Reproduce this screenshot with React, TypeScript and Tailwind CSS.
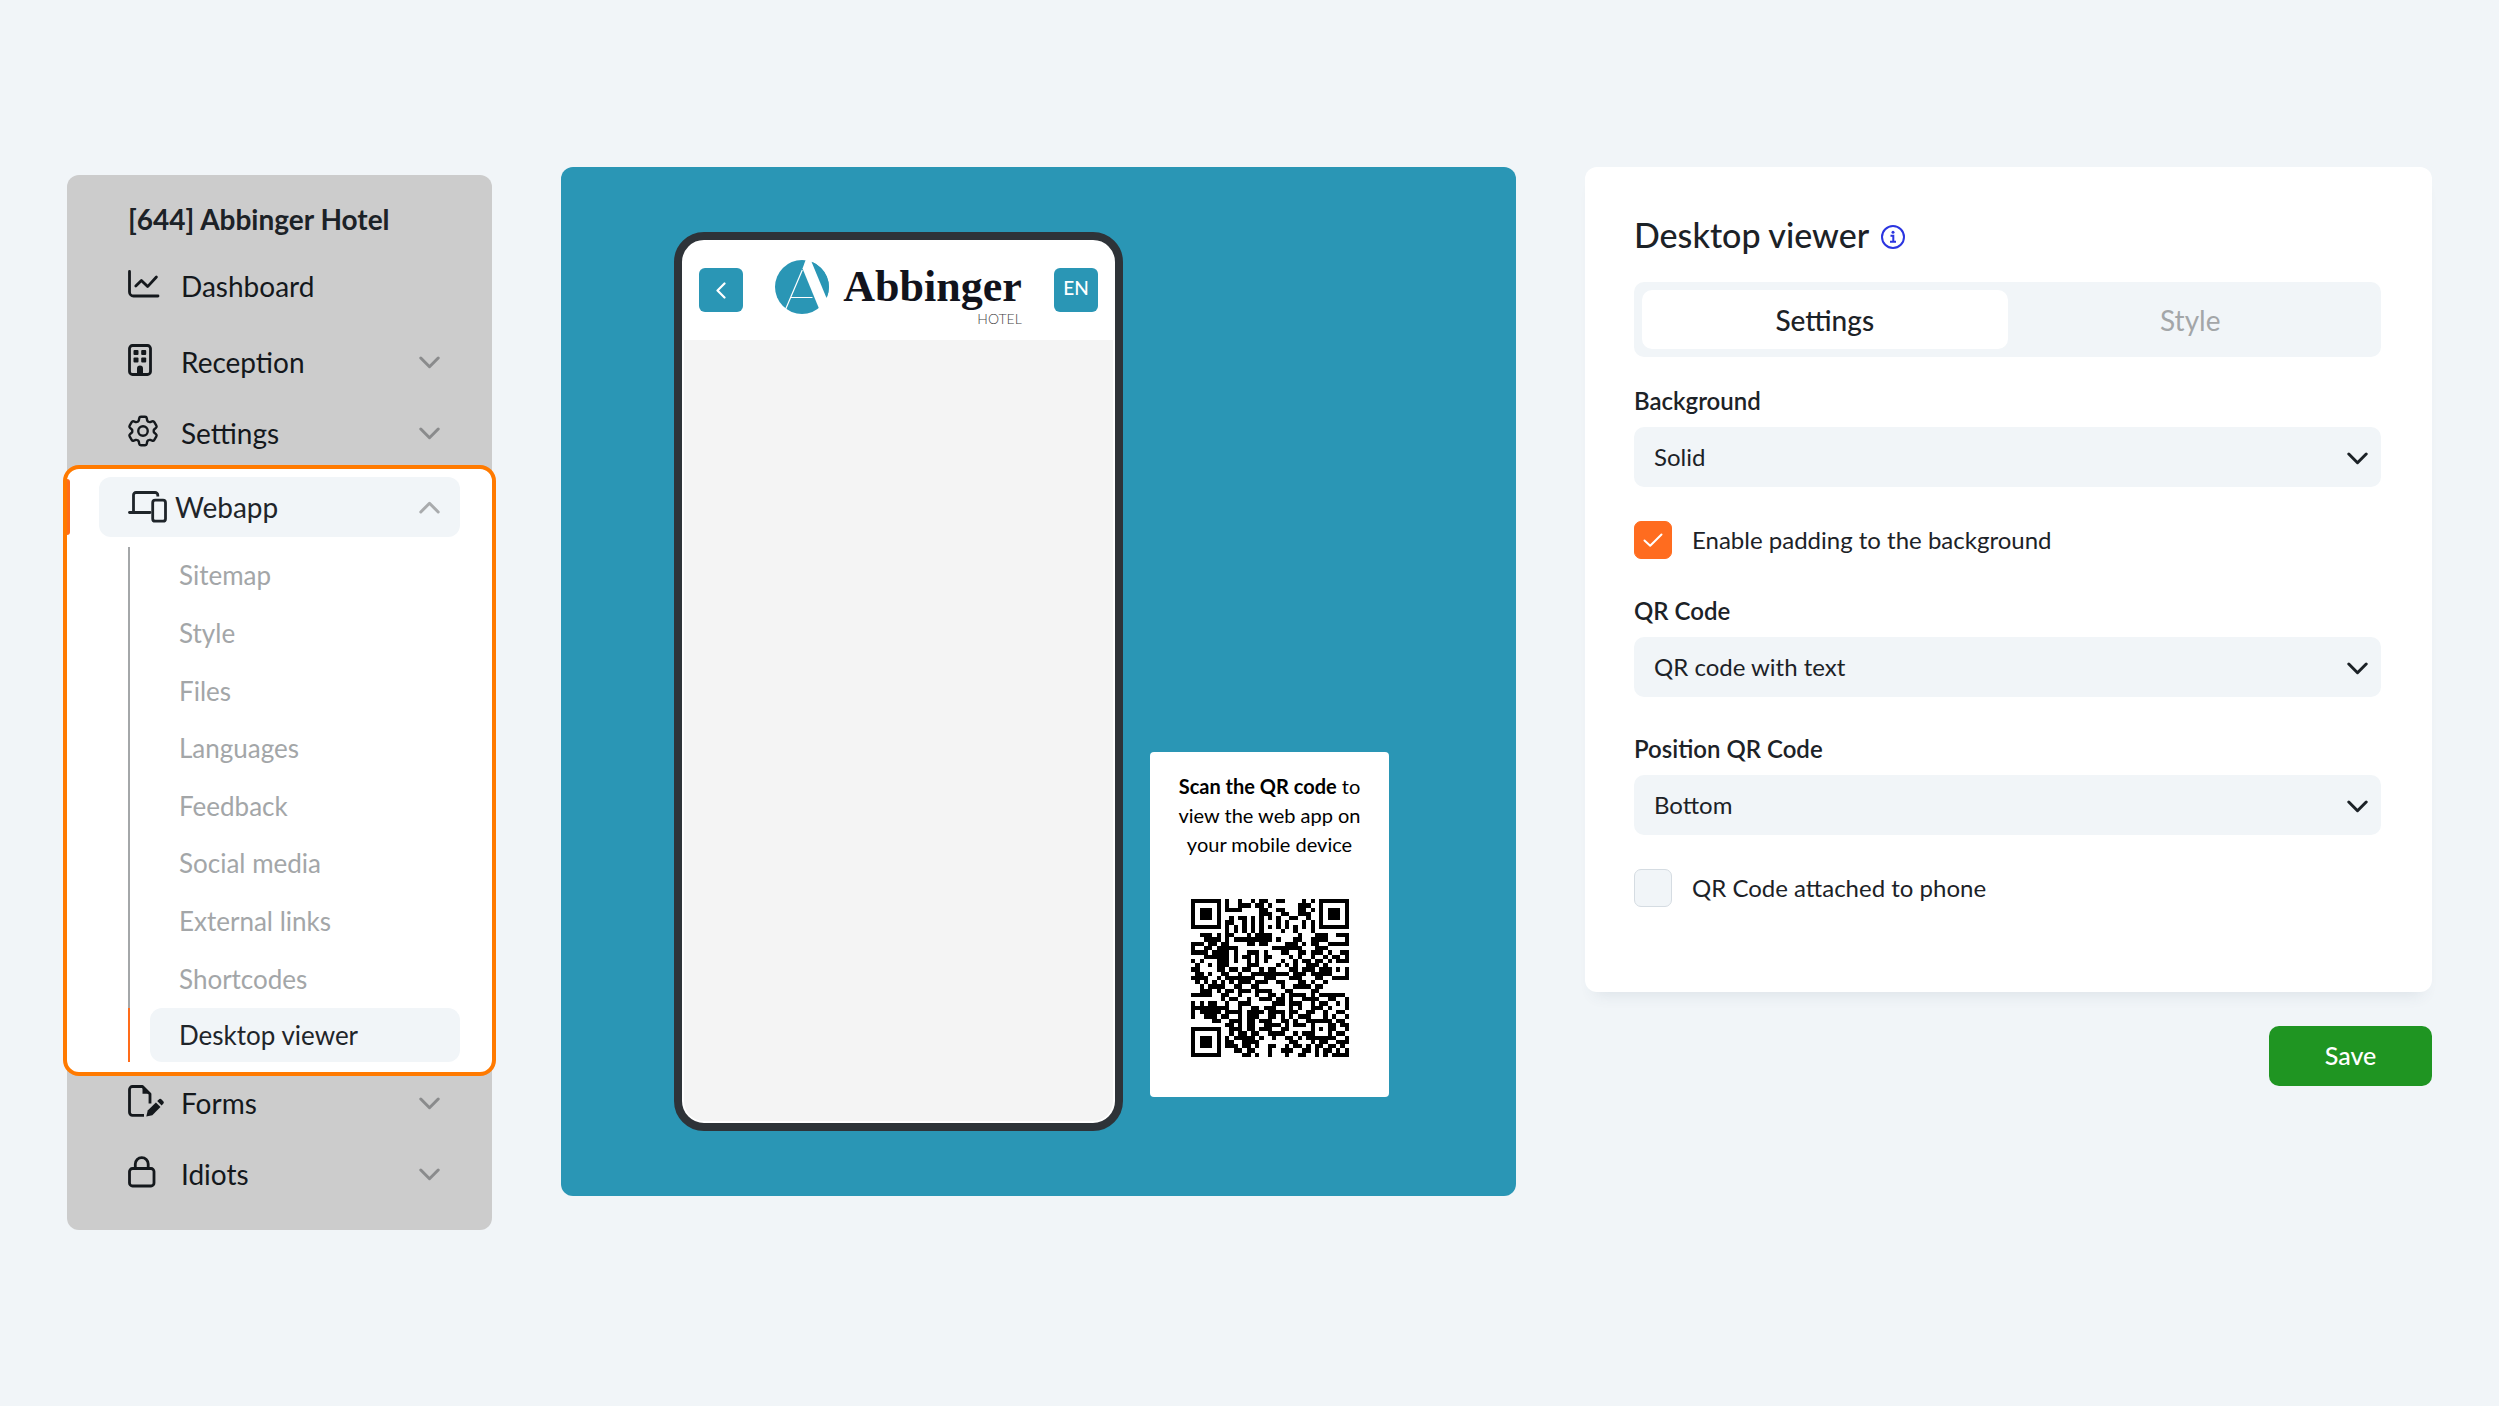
import { useState } from "react"
import type { ReactNode } from "react"
import clsx from "clsx"
import { HiOutlineCog6Tooth } from "react-icons/hi2"

const submenu = [
  "Sitemap",
  "Style",
  "Files",
  "Languages",
  "Feedback",
  "Social media",
  "External links",
  "Shortcodes",
]

const qrRows = [
  "1111111010010010110011000010101111111",
  "1000001010011101101000000111001000001",
  "1011101011110000110011000110101011101",
  "1011101000000000111001100111001011101",
  "1011101001011010101010011001001011101",
  "1000001011001010100010100010101000001",
  "1111111010101010101010101010101111111",
  "0000000010101010100001001000100000000",
  "0011101011000101111000000100011100111",
  "0001111010111111111010001100111100001",
  "1110110110000110110000111010110011111",
  "1001101111100000000111111100011100000",
  "1111011110100111010001100110111010011",
  "0001111110101101011000010100100101101",
  "1010001110100101010001001011011010111",
  "0100101110000111000010101001110100000",
  "1100001101101100101100011011101110101",
  "0110100110010011111111101110111110001",
  "1111001011111110011100011100011001111",
  "0101010101011101110011000110100100000",
  "0010111100110011000001001111011000000",
  "0011101011011101111000110000110000000",
  "1111100110010001001101011110101111110",
  "0000000101100100111011010011110011001",
  "1010110010011100000111011100101100101",
  "1111111110010011011100010100111010001",
  "1011111011110111101111011001100100110",
  "1001110110010111001101010111000101001",
  "0000011001110110111001101001111110110",
  "0000000011010110011110101110100011011",
  "1111111001110110111001100000101011001",
  "1000001001011011001111001011100010110",
  "1011101010111110100100110101111111001",
  "1011101011001111000000011000101100111",
  "1011101011101101001100101101011011010",
  "1000001000110110001001110011010110101",
  "1111111000001101001000100110010101111",
]

const Chevron = ({ up, className }: { up?: boolean; className?: string }) => (
  <svg
    viewBox="0 0 21 13"
    className={clsx("h-[13px] w-[21px] shrink-0", up && "rotate-180", className)}
    fill="none"
    stroke="currentColor"
    strokeWidth="3"
    strokeLinecap="round"
    strokeLinejoin="round"
    aria-hidden="true"
  >
    <path d="M1.8 2l8.7 8.7L19.2 2" />
  </svg>
)

const Stroke = ({ width, height, children }: { width: number; height: number; children: ReactNode }) => (
  <svg
    width={width}
    height={height}
    viewBox={`0 0 ${width} ${height}`}
    className="shrink-0"
    fill="none"
    stroke="currentColor"
    strokeWidth="2.8"
    strokeLinecap="round"
    strokeLinejoin="round"
    aria-hidden="true"
  >
    {children}
  </svg>
)

const ChartIcon = () => (
  <Stroke width={32} height={28}>
    <path d="M1.5 1.5V22a4 4 0 0 0 4 4H30" />
    <path d="M7.8 16l5.6-5.6 6.2 6.2L28.4 7" />
  </Stroke>
)

const BuildingIcon = () => (
  <Stroke width={24} height={32}>
    <rect x="1.5" y="1.5" width="21" height="29" rx="3" />
    <g fill="currentColor" stroke="none">
      <rect x="5.5" y="6" width="5" height="5" rx="1" />
      <rect x="13.2" y="6" width="5" height="5" rx="1" />
      <rect x="5.5" y="13.4" width="5" height="5" rx="1" />
      <rect x="13.2" y="13.4" width="5" height="5" rx="1" />
      <path d="M9 30.5V24.6a3 3 0 0 1 6 0V30.5z" />
    </g>
  </Stroke>
)

const DevicesIcon = () => (
  <Stroke width={39} height={32}>
    <path d="M5.5 20.5V4a2.5 2.5 0 0 1 2.5-2.5H27a2.8 2.8 0 0 1 2.8 2.8V5.5" strokeLinecap="butt" />
    <path d="M1.5 21.5H22" />
    <rect x="24.7" y="9.2" width="12.8" height="21" rx="2.5" />
  </Stroke>
)

const FormIcon = () => (
  <Stroke width={36} height={32}>
    <path d="M16 30.3H4.5a3 3 0 0 1-3-3V4.5a3 3 0 0 1 3-3H14.5L22 9V18.5" strokeLinecap="butt" />
    <path d="M14.5 2V8.8H21.5z" fill="currentColor" stroke="none" />
    <g fill="currentColor" stroke="none">
      <path d="M18.3 31.6l1.4-6 8.2-8.2 4.6 4.6-8.2 8.2z" />
      <path d="M29.2 16.1l1.4-1.4a2.2 2.2 0 0 1 3.2 0l1.2 1.2a2.2 2.2 0 0 1 0 3.2l-1.4 1.4z" />
    </g>
  </Stroke>
)

const LockIcon = () => (
  <Stroke width={28} height={32}>
    <rect x="1.5" y="12.5" width="24.5" height="17.5" rx="3" />
    <path d="M7.3 12.5V8a6.45 6.45 0 0 1 12.9 0V12.5" />
  </Stroke>
)

const MenuItem = ({ icon, label, expandable = true }: { icon: ReactNode; label: string; expandable?: boolean }) => (
  <a href="#" className="flex h-[54px] items-center pl-[61px] pr-[52px] text-[28px] text-[#14181c]">
    <span className="flex w-[53px] shrink-0 pb-1">{icon}</span>
    <span className="flex-1">{label}</span>
    {expandable && <Chevron className="text-[#8a8b8c]" />}
  </a>
)

const Sidebar = () => (
  <nav className="mt-2 rounded-xl bg-[#ccc] pt-6 pb-[29px]">
    <h2 className="pl-[61px] text-[28px] leading-10 font-bold text-[#1c2227]">[644] Abbinger Hotel</h2>
    <div className="mt-5">
      <MenuItem icon={<ChartIcon />} label="Dashboard" expandable={false} />
    </div>
    <div className="mt-[22px] mb-[5px] flex flex-col gap-[17px]">
      <MenuItem icon={<BuildingIcon />} label="Reception" />
      <MenuItem icon={<HiOutlineCog6Tooth className="-ml-1 size-[38px]" />} label="Settings" />
    </div>

    <div className="relative -mx-1 rounded-2xl border-4 border-[#ff7a00] bg-white pt-2 pr-8 pb-[10px] pl-8">
      <span className="absolute top-[10px] left-0 h-14 w-[3px] rounded-r bg-[#ff6c1a]" />
      <a
        href="#"
        className="flex h-[60px] items-center rounded-xl bg-[#f1f5f8] pl-[29px] pr-5 text-[28px] text-[#1f252a]"
      >
        <span className="flex w-[47px] shrink-0">
          <DevicesIcon />
        </span>
        <span className="flex-1">Webapp</span>
        <Chevron up className="text-[#a9abad]" />
      </a>
      <div className="mt-[10px] ml-[29px] text-[26px]">
        <div className="flex h-[461px] flex-col border-l-2 border-[#a4a7a9]">
          {submenu.map((item) => (
            <a key={item} href="#" className="flex flex-1 items-center pl-[49px] text-[#a3a6a8]">
              {item}
            </a>
          ))}
        </div>
        <div className="border-l-2 border-[#ff6c1a] pl-5">
          <a href="#" className="flex h-[54px] items-center rounded-xl bg-[#f1f5f8] pl-[29px] text-[#1f252a]">
            Desktop viewer
          </a>
        </div>
      </div>
    </div>

    <div className="flex flex-col gap-[17px]">
      <MenuItem icon={<FormIcon />} label="Forms" />
      <MenuItem icon={<LockIcon />} label="Idiots" />
    </div>
  </nav>
)

const Logo = () => (
  <div className="flex">
    <svg viewBox="0 0 54 54" className="mt-[-3px] size-[54px]" aria-hidden="true">
      <circle cx="27" cy="27" r="27" fill="#2a96b5" />
      <path d="M31 -1L27.5 8.5L44.6 50L54 41L36 -1z" fill="#fff" />
      <path d="M36.5 1.8A27 27 0 0 1 51.5 38z" fill="#2a96b5" />
      <path d="M27.3 10L10.5 49.5M15.5 37.5H37.5" stroke="#fff" strokeWidth="1.2" fill="none" />
    </svg>
    <div className="ml-[14px] flex flex-col items-end">
      <span className="font-['Liberation_Serif',serif] text-[44px] leading-[48px] font-bold text-[#11131c]">
        Abbinger
      </span>
      <span className="text-sm leading-4 font-light text-[#444]">HOTEL</span>
    </div>
  </div>
)

const Phone = () => (
  <div className="flex h-[899px] w-[449px] flex-col overflow-hidden rounded-[30px] border-8 border-[#2e3338] bg-white">
    <header className="flex h-[100px] shrink-0 items-start justify-between px-[17px] pt-7">
      <button
        type="button"
        aria-label="Back"
        className="flex size-11 items-center justify-center rounded-md bg-[#2a96b5] text-white"
      >
        <svg
          viewBox="0 0 10 17"
          className="h-[17px] w-[10px]"
          fill="none"
          stroke="currentColor"
          strokeWidth="2.2"
          strokeLinecap="round"
          strokeLinejoin="round"
        >
          <path d="M8.5 1.5l-7 7 7 7" />
        </svg>
      </button>
      <div className="-mt-[5px]">
        <Logo />
      </div>
      <button type="button" className="size-11 rounded-md bg-[#2a96b5] pb-1 text-[19px] font-medium text-white">
        EN
      </button>
    </header>
    <div className="mx-[2px] mb-[2px] flex-1 rounded-b-[20px] bg-[#f4f4f4]" />
  </div>
)

const QrCode = () => (
  <svg viewBox="0 0 37 37" className="size-[158px]" shapeRendering="crispEdges" role="img" aria-label="QR code">
    {qrRows.map((row, y) =>
      row.split("").map((cell, x) => cell === "1" && <rect key={`${x}-${y}`} x={x} y={y} width="1" height="1" />)
    )}
  </svg>
)

const Preview = () => (
  <section className="flex h-[1029px] items-end rounded-xl bg-[#2a96b5] pb-[65px] pl-[113px]">
    <Phone />
    <div className="mb-[34px] ml-[27px] flex h-[345px] w-[239px] shrink-0 flex-col items-center rounded-[4px] bg-white pt-5">
      <p className="text-center text-[20px] leading-[29px] text-black">
        <strong>Scan the QR code</strong> to
        <br />
        view the web app on
        <br />
        your mobile device
      </p>
      <div className="mt-10">
        <QrCode />
      </div>
    </div>
  </section>
)

const Select = ({ id, label, options }: { id: string; label: string; options: string[] }) => (
  <div>
    <label htmlFor={id} className="block text-[24px] leading-8 font-semibold">
      {label}
    </label>
    <div className="relative mt-[10px]">
      <select
        id={id}
        className="block h-[60px] w-full appearance-none rounded-[10px] bg-[#f1f5f8] px-5 text-[24px]"
      >
        {options.map((option) => (
          <option key={option}>{option}</option>
        ))}
      </select>
      <Chevron className="pointer-events-none absolute top-[25px] right-[13px]" />
    </div>
  </div>
)

const Checkbox = ({ label, initial = false }: { label: string; initial?: boolean }) => {
  const [checked, setChecked] = useState(initial)

  return (
    <label className="flex items-center gap-5 text-[24px] leading-[38px]">
      <span className="relative flex">
        <input
          type="checkbox"
          checked={checked}
          onChange={() => setChecked(!checked)}
          className="size-[38px] appearance-none rounded-[7px] border border-[#d5dce2] bg-[#f1f5f8] checked:border-[#ff6c1f] checked:bg-[#ff6c1f]"
        />
        {checked && (
          <svg
            viewBox="0 0 38 38"
            className="pointer-events-none absolute inset-0 text-white"
            fill="none"
            stroke="currentColor"
            strokeWidth="2"
            strokeLinecap="round"
            strokeLinejoin="round"
          >
            <path d="M10.5 19.5l5.7 5.2L27.5 13.5" />
          </svg>
        )}
      </span>
      {label}
    </label>
  )
}

const SettingsPanel = () => {
  const [tab, setTab] = useState("Settings")

  return (
    <section className="flex flex-col">
      <div className="rounded-xl bg-white pt-12 pr-[51px] pb-[85px] pl-[49px] shadow-[0_12px_16px_-10px_rgba(60,80,110,0.12)]">
        <h1 className="flex items-center gap-3 text-[34px] leading-10 font-medium">
          Desktop viewer
          <svg viewBox="0 0 24 24" className="mt-1 size-6 text-[#2b35e0]" fill="none" stroke="currentColor" strokeWidth="2">
            <circle cx="12" cy="12" r="11" />
            <path d="M9.5 10.8H12.3V16.6M9 16.8H15" />
            <circle cx="12" cy="7.3" r="1.5" fill="currentColor" stroke="none" />
          </svg>
        </h1>
        <div className="mt-[27px] flex rounded-[10px] bg-[#f1f5f8] p-2">
          {["Settings", "Style"].map((name) => (
            <button
              key={name}
              type="button"
              onClick={() => setTab(name)}
              className={clsx(
                "h-[59px] flex-1 rounded-[10px] text-[28px]",
                tab === name ? "bg-white font-medium" : "text-[#a3a6a8]"
              )}
            >
              {name}
            </button>
          ))}
        </div>
        <form className="mt-7">
          <Select id="background" label="Background" options={["Solid", "Image"]} />
          <div className="mt-[34px] mb-9">
            <Checkbox label="Enable padding to the background" initial />
          </div>
          <div className="flex flex-col gap-9">
            <Select id="qr-code" label="QR Code" options={["QR code with text", "QR code"]} />
            <Select id="qr-position" label="Position QR Code" options={["Bottom", "Top"]} />
          </div>
          <div className="mt-[34px]">
            <Checkbox label="QR Code attached to phone" />
          </div>
        </form>
      </div>
      <button
        type="button"
        className="mt-[34px] h-[60px] w-[163px] self-end rounded-[10px] bg-[#1f9522] text-[25px] font-medium text-white"
      >
        Save
      </button>
    </section>
  )
}

export default function App() {
  return (
    <main className="grid min-h-screen grid-cols-[425px_955fr_847fr] items-start gap-x-[69px] bg-[#f1f5f8] px-[67px] pt-[167px] font-['Lato',sans-serif] text-[#1c2227]">
      <Sidebar />
      <Preview />
      <SettingsPanel />
    </main>
  )
}
